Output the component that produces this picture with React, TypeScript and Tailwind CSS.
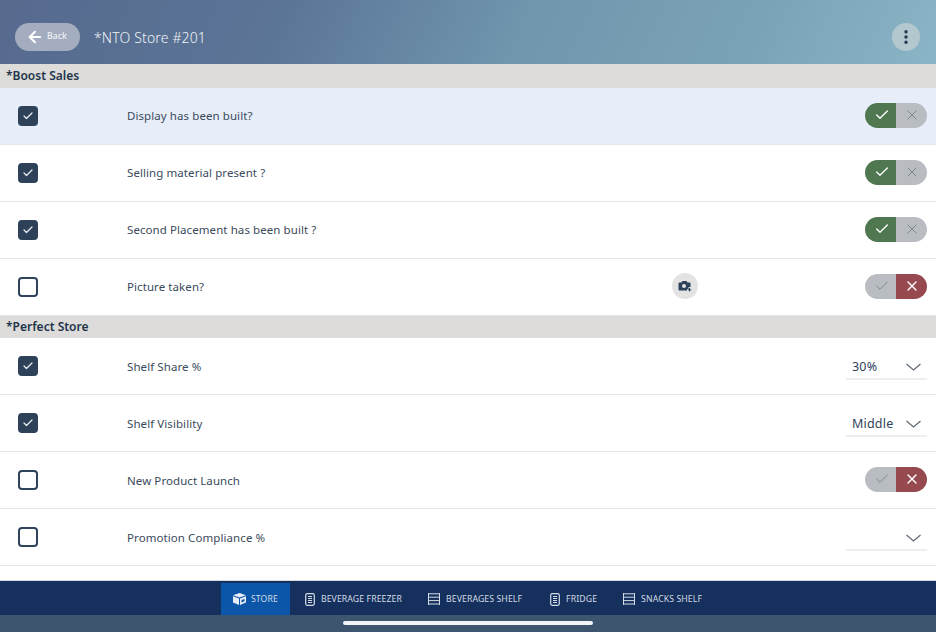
import { ReactNode } from 'react';
import { ArrowLeft, Check, EllipsisVertical, X } from 'lucide-react';

function Checkbox({ checked }: { checked: boolean }) {
  if (!checked) {
    return <div className="h-[20px] w-[20px] rounded-[4px] border-2 border-[#2f435a] bg-white" />;
  }
  return (
    <div className="flex h-[20px] w-[20px] items-center justify-center rounded-[4px] bg-[#2d4158]">
      <Check size={12} strokeWidth={2.5} className="text-[#e8edf2]" />
    </div>
  );
}

function YesNo({ value }: { value: 'yes' | 'no' }) {
  const yes = value === 'yes';
  return (
    <div className="mb-[2px] flex h-[25px] w-[62px] overflow-hidden rounded-full">
      <div className={`flex w-[31px] items-center justify-center pl-[3px] ${yes ? 'bg-[#4f7750]' : 'bg-[#b9bdc1]'}`}>
        <Check size={16} strokeWidth={yes ? 2 : 1.5} className={yes ? 'text-white' : 'text-[#7d858d]'} />
      </div>
      <div className={`flex w-[31px] items-center justify-center ${yes ? 'bg-[#b9bdc1]' : 'bg-[#964a4f]'}`}>
        <X size={16} strokeWidth={yes ? 1.5 : 2} className={yes ? 'text-[#7d858d]' : 'text-white'} />
      </div>
    </div>
  );
}

function Picker({ value }: { value?: string }) {
  return (
    <div className="flex h-[27px] w-[82px] items-center justify-between border-b-2 border-[#eeeeee] pl-[6px] pr-[6px] pt-[4px]">
      <span className="text-[12.5px] tracking-[0.2px] text-[#2f435a]">{value}</span>
      <svg width="15" height="8" viewBox="0 0 15 8" fill="none" stroke="#5a6570" strokeWidth="1.1">
        <path d="M.5 1 7.5 7 14.5 1" />
      </svg>
    </div>
  );
}

function SectionHeader({ title, tall }: { title: string; tall?: boolean }) {
  return (
    <div className={`flex items-center bg-[#dddcda] pl-[6px] text-[12px] font-semibold text-[#22344a] ${tall ? 'h-[24px]' : 'h-[22px]'}`}>
      {title}
    </div>
  );
}

function Row({
  label,
  checked,
  highlight,
  low,
  middle,
  right,
}: {
  label: string;
  checked: boolean;
  highlight?: boolean;
  low?: boolean;
  middle?: ReactNode;
  right: ReactNode;
}) {
  return (
    <div className={`flex h-[57px] items-center border-b border-[#e6e6e6] ${highlight ? 'bg-[#e7eefa]' : 'bg-white'}`}>
      <div className="flex w-[127px] items-center pl-[18px]">
        <Checkbox checked={checked} />
      </div>
      <div className={`flex-1 text-[11.5px] tracking-[0.08px] text-[#3a4a5c] ${low ? 'pt-[2px]' : ''}`}>{label}</div>
      {middle}
      <div className="flex w-[90px] justify-end pr-[9px]">{right}</div>
    </div>
  );
}

function CameraButton() {
  return (
    <div className="mb-[2px] mr-[148px] flex h-[26px] w-[26px] items-center justify-center rounded-full bg-[#e3e3e3]">
      <svg width="14" height="12" viewBox="0 0 14 12">
        <path
          d="M1.5 2.5h2l1-1.5h4l1 1.5h2a1 1 0 0 1 1 1V7h-2v2H9v1.5H1.5a1 1 0 0 1-1-1v-6a1 1 0 0 1 1-1z"
          fill="#2d4158"
        />
        <circle cx="6" cy="6" r="2" fill="#e3e3e3" />
        <path d="M11.5 8v3.5M9.8 9.8h3.4" stroke="#2d4158" strokeWidth="1" />
      </svg>
    </div>
  );
}

function CubeIcon() {
  return (
    <svg width="13" height="12" viewBox="0 0 13 12" fill="#e6edf6">
      <path d="M6.5 0 13 2.2 6.5 4.6 0 2.2z" />
      <path d="M0 3.2 6 5.4V12L0 9.6z" />
      <path d="M7 5.4 13 3.2v6.4L7 12zM8.5 7v2.5l3-1.2V6z" fillRule="evenodd" />
    </svg>
  );
}

function FreezerIcon() {
  return (
    <svg width="10" height="13" viewBox="0 0 10 13" fill="none" stroke="#d3dbe6">
      <rect x="0.7" y="0.7" width="8.6" height="11.6" rx="1.5" strokeWidth="1.2" />
      <path d="M3 3.5h4M3 5.5h4M3 7.5h4M3 9.5h4" strokeWidth="1" />
    </svg>
  );
}

function ShelfIcon() {
  return (
    <svg width="12" height="12" viewBox="0 0 12 12" fill="none" stroke="#d3dbe6" strokeWidth="1">
      <path d="M.5 0v12M11.5 0v12M0 .8h12M0 4.2h12M0 7.6h12M0 11h12" />
    </svg>
  );
}

function Tab({ icon, label, className }: { icon: ReactNode; label: string; className: string }) {
  return (
    <div className={`flex h-[32px] items-center ${className}`}>
      {icon}
      <span className="pt-[1px] text-[8.7px] tracking-[0.1px] text-[#d3dbe6]">{label}</span>
    </div>
  );
}

export default function App() {
  return (
    <div className='flex h-[632px] w-[936px] flex-col overflow-hidden bg-white font-["Noto_Sans",sans-serif]'>
      <div className="flex h-[64px] items-center justify-between bg-[linear-gradient(115deg,#566a8e_0%,#5b7597_30%,#7095ad_55%,#7ba3b6_80%,#8ab5c6_100%)] pl-[15px] pr-[16px] pt-[9px]">
        <div className="flex items-center">
          <div className="flex h-[28px] w-[65px] items-center gap-[3px] rounded-full bg-[#a3adbf] pl-[11px]">
            <ArrowLeft size={18} strokeWidth={2.75} className="text-white" />
            <span className="pt-[1px] text-[8.8px] font-medium text-[#eef1f5]">Back</span>
          </div>
          <span className="ml-[14px] pt-[1px] text-[14px] font-light tracking-[0.15px] text-[#eef2f6]">*NTO Store #201</span>
        </div>
        <div className="flex h-[28px] w-[28px] items-center justify-center rounded-full bg-[#b3c7cf]">
          <EllipsisVertical size={18} strokeWidth={2.5} className="text-[#22344a]" />
        </div>
      </div>

      <div className="flex-1 border-b border-[#d5d8dc]">
        <SectionHeader title="*Boost Sales" tall />
        <Row label="Display has been built?" checked highlight right={<YesNo value="yes" />} />
        <Row label="Selling material present ?" checked right={<YesNo value="yes" />} />
        <Row label="Second Placement has been built ?" checked right={<YesNo value="yes" />} />
        <Row label="Picture taken?" checked={false} middle={<CameraButton />} right={<YesNo value="no" />} />
        <SectionHeader title="*Perfect Store" />
        <Row label="Shelf Share %" checked low right={<Picker value="30%" />} />
        <Row label="Shelf Visibility" checked low right={<Picker value="Middle" />} />
        <Row label="New Product Launch" checked={false} low right={<YesNo value="no" />} />
        <Row label="Promotion Compliance %" checked={false} low right={<Picker />} />
      </div>

      <div className="flex h-[34px] justify-center bg-[#15305c] pt-[2px]">
        <Tab icon={<CubeIcon />} label="STORE" className="mr-[2px] gap-[5px] bg-[#0b56a8] px-[12px]" />
        <Tab icon={<FreezerIcon />} label="BEVERAGE FREEZER" className="gap-[6px] px-[13px]" />
        <Tab icon={<ShelfIcon />} label="BEVERAGES SHELF" className="gap-[6px] px-[13px]" />
        <Tab icon={<FreezerIcon />} label="FRIDGE" className="ml-[2px] gap-[6px] px-[13px]" />
        <Tab icon={<ShelfIcon />} label="SNACKS SHELF" className="gap-[6px] px-[13px]" />
      </div>
      <div className="flex h-[17px] justify-center bg-[#3e5570] pt-[6px]">
        <div className="h-[4px] w-[250px] rounded-full bg-[#f2f3f4]" />
      </div>
    </div>
  );
}
